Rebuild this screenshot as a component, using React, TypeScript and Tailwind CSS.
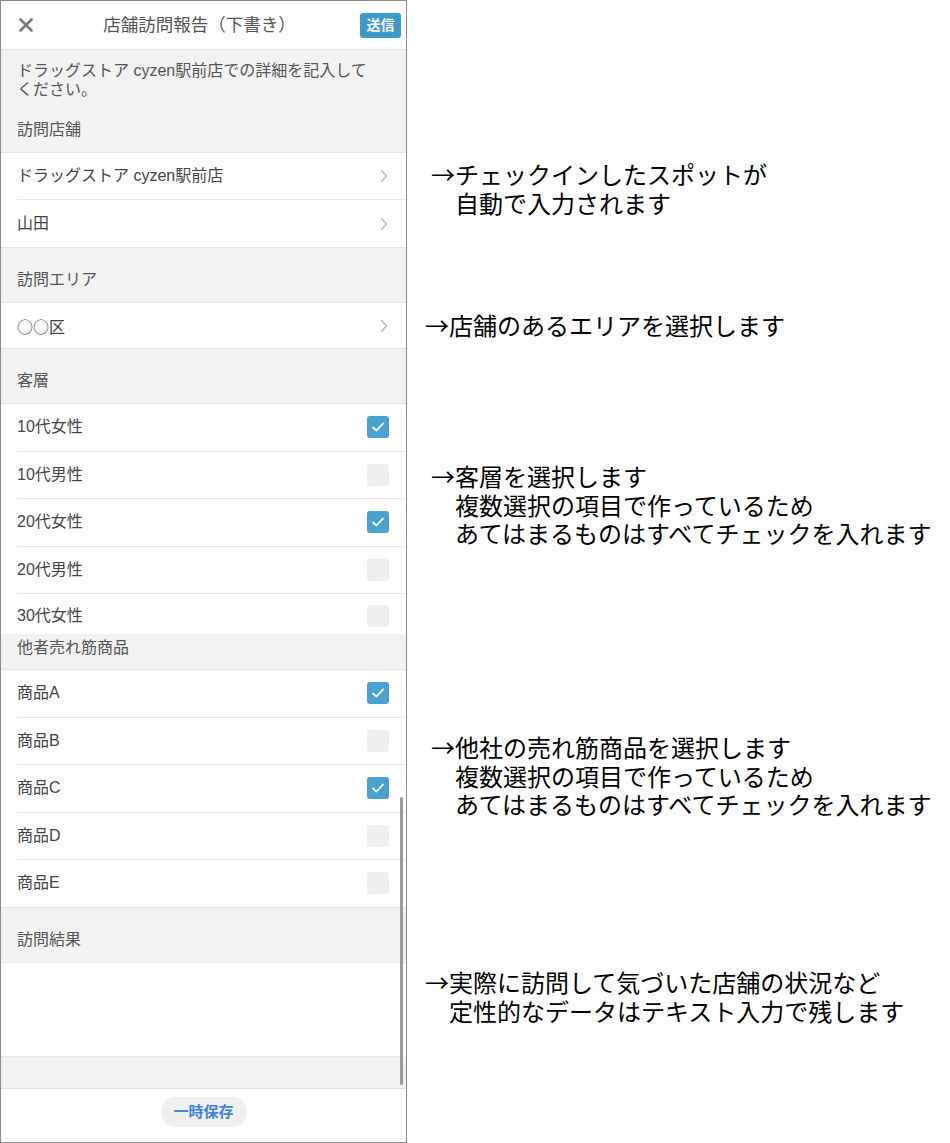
import React from "react";

const uiFont = { fontFamily: '"Liberation Sans", "Noto Sans CJK JP", sans-serif' };
const noteFont = { fontFamily: '"Noto Sans CJK JP", sans-serif' };
const cjkFont = { fontFamily: '"Noto Sans CJK JP", sans-serif' };

function Chevron() {
  return (
    <svg width="8" height="14" viewBox="0 0 8 14" className="shrink-0">
      <polyline points="1.5,1.5 6.5,7 1.5,12.5" fill="none" stroke="#bdbdbd" strokeWidth="1.6" strokeLinecap="round" strokeLinejoin="round" />
    </svg>
  );
}

function Check({ on }: { on: boolean }) {
  if (!on) return <div className="w-[22px] h-[22px] rounded-[3px] bg-[#efefef] shrink-0" />;
  return (
    <div className="w-[22px] h-[22px] rounded-[3px] bg-[#4aa3cf] shrink-0 flex items-center justify-center">
      <svg width="14" height="12" viewBox="0 0 14 12">
        <polyline points="2,6.5 5.5,9.5 12,2.5" fill="none" stroke="#ffffff" strokeWidth="1.8" strokeLinecap="round" strokeLinejoin="round" />
      </svg>
    </div>
  );
}

function SectionHeader({ label }: { label: string }) {
  return (
    <div className="h-[55px] border-b border-[#e4e4e4] pl-4 pt-[22px] text-[16px] leading-[20px] text-[#555] shrink-0">{label}</div>
  );
}

function LinkRow({ label, last, h, cjk }: { label: string; last?: boolean; h: string; cjk?: boolean }) {
  return (
    <div className={`bg-white shrink-0 ${h} ${last ? "border-b border-[#e4e4e4]" : ""}`}>
      <div className={`ml-4 h-full flex items-center justify-between pr-[18px] ${last ? "" : "border-b border-[#e8e8e8]"}`}>
        <span className="text-[16px] text-[#444]" style={cjk ? cjkFont : undefined}>{label}</span>
        <Chevron />
      </div>
    </div>
  );
}

function CheckRow({ label, on, variant }: { label: string; on: boolean; variant: "mid" | "lastFull" | "cut" }) {
  if (variant === "cut") {
    return (
      <div className="bg-white h-[40px] shrink-0">
        <div className="ml-4 h-full flex items-center justify-between pr-[17px] pt-[3px]">
          <span className="text-[16px] text-[#444]">{label}</span>
          <Check on={on} />
        </div>
      </div>
    );
  }
  return (
    <div className={`bg-white h-[47.5px] shrink-0 ${variant === "lastFull" ? "border-b border-[#e4e4e4]" : ""}`}>
      <div className={`ml-4 h-full flex items-center justify-between pr-[17px] ${variant === "mid" ? "border-b border-[#e8e8e8]" : ""}`}>
        <span className="text-[16px] text-[#444]">{label}</span>
        <Check on={on} />
      </div>
    </div>
  );
}

function Note({ lines, mt, ml }: { lines: string[]; mt: string; ml: string }) {
  return (
    <div className={`${mt} ${ml} text-[24px] leading-[28.5px] text-black whitespace-nowrap`} style={noteFont}>
      {lines.map((l, i) => (
        <div key={i} className={i === 0 ? "" : "pl-[24px]"}>{l}</div>
      ))}
    </div>
  );
}

export default function App() {
  return (
    <div className="w-[950px] h-[1143px] bg-white flex overflow-hidden">
      <div className="w-[407px] h-[1143px] border border-[#8a8a8a] flex flex-col shrink-0" style={uiFont}>
        {/* header */}
        <div className="h-[49px] border-b border-[#e2e2e2] flex items-center justify-between pl-[18px] pr-[5px] shrink-0">
          <svg width="14" height="14" viewBox="0 0 14 14">
            <line x1="1.5" y1="1.5" x2="12.5" y2="12.5" stroke="#7a7a7a" strokeWidth="2.6" strokeLinecap="round" />
            <line x1="12.5" y1="1.5" x2="1.5" y2="12.5" stroke="#7a7a7a" strokeWidth="2.6" strokeLinecap="round" />
          </svg>
          <div className="text-[17.5px] text-[#555] ml-[6px]">店舗訪問報告（下書き）</div>
          <div className="w-[41px] h-[25px] rounded-[3px] bg-[#3d9bca] text-white text-[14px] font-bold flex items-center justify-center">送信</div>
        </div>

        {/* content */}
        <div className="flex-1 bg-[#f2f2f2] relative overflow-hidden flex flex-col">
          <div className="h-[103px] border-b border-[#e4e4e4] pl-4 pr-4 pt-[11px] shrink-0">
            <div className="text-[16px] leading-[19px] text-[#555] whitespace-nowrap">
              <div>ドラッグストア cyzen駅前店での詳細を記入して</div>
              <div>ください。</div>
            </div>
            <div className="mt-[21px] text-[16px] leading-[20px] text-[#555]">訪問店舗</div>
          </div>
          <LinkRow label="ドラッグストア cyzen駅前店" h="h-[47px]" />
          <LinkRow label="山田" h="h-[48px]" last />
          <SectionHeader label="訪問エリア" />
          <LinkRow label="○○区" h="h-[46px]" last cjk />
          <SectionHeader label="客層" />
          <CheckRow label="10代女性" on variant="mid" />
          <CheckRow label="10代男性" on={false} variant="mid" />
          <CheckRow label="20代女性" on variant="mid" />
          <CheckRow label="20代男性" on={false} variant="mid" />
          <CheckRow label="30代女性" on={false} variant="cut" />
          <div className="h-[36px] border-b border-[#e4e4e4] pl-4 pt-[4px] text-[16px] leading-[20px] text-[#555] shrink-0">他者売れ筋商品</div>
          <CheckRow label="商品A" on variant="mid" />
          <CheckRow label="商品B" on={false} variant="mid" />
          <CheckRow label="商品C" on variant="mid" />
          <CheckRow label="商品D" on={false} variant="mid" />
          <CheckRow label="商品E" on={false} variant="lastFull" />
          <SectionHeader label="訪問結果" />
          <div className="h-[94px] bg-white border-b border-[#e8e8e8] shrink-0" />
          <div className="flex-1" />
          <div className="absolute right-[3px] bottom-[3px] w-[3px] h-[288px] rounded-full bg-[#9b9b9b]" />
        </div>

        {/* footer */}
        <div className="h-[54px] border-t border-[#e2e2e2] flex justify-center pt-[8px] shrink-0">
          <div className="w-[86px] h-[30px] rounded-full bg-[#efefef] text-[#3f82e0] text-[15px] font-bold flex items-center justify-center">一時保存</div>
        </div>
      </div>

      {/* annotations */}
      <div className="flex flex-col">
        <Note mt="mt-[160px]" ml="ml-[24px]" lines={["→チェックインしたスポットが", "自動で入力されます"]} />
        <Note mt="mt-[94px]" ml="ml-[18px]" lines={["→店舗のあるエリアを選択します"]} />
        <Note mt="mt-[122.5px]" ml="ml-[24px]" lines={["→客層を選択します", "複数選択の項目で作っているため", "あてはまるものはすべてチェックを入れます"]} />
        <Note mt="mt-[185.5px]" ml="ml-[24px]" lines={["→他社の売れ筋商品を選択します", "複数選択の項目で作っているため", "あてはまるものはすべてチェックを入れます"]} />
        <Note mt="mt-[149.5px]" ml="ml-[18px]" lines={["→実際に訪問して気づいた店舗の状況など", "定性的なデータはテキスト入力で残します"]} />
      </div>
    </div>
  );
}
